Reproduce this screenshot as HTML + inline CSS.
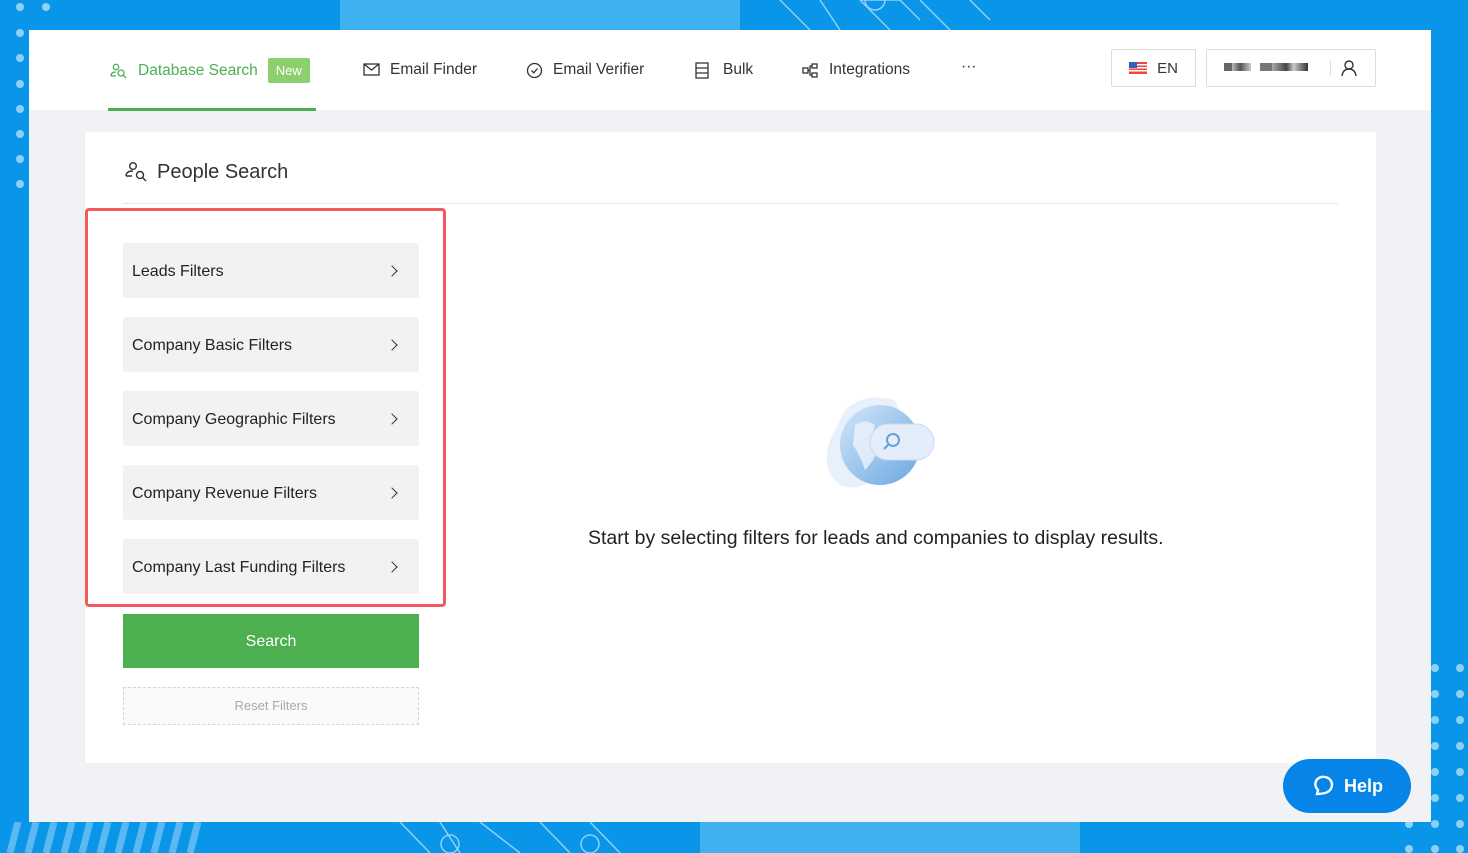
<!DOCTYPE html>
<html><head><meta charset="utf-8"><style>
*{margin:0;padding:0;box-sizing:border-box}
body{width:1468px;height:853px;overflow:hidden;background:#0a96e8;font-family:"Liberation Sans",sans-serif;position:relative;color:#333}
.abs{position:absolute}
.dot{position:absolute;width:8px;height:8px;border-radius:50%;background:#8fd0f7}
.panel{left:29px;top:30px;width:1402px;height:792px;background:#f0f2f5}
.nav{left:29px;top:30px;width:1402px;height:80px;background:#fff}
.ni{position:absolute;top:61px;font-size:15.5px;color:#333;display:flex;align-items:center;gap:10px}
.card{left:85px;top:132px;width:1291px;height:631px;background:#fff}
.fb{position:absolute;left:123px;width:296px;height:55px;background:#f2f2f2;border-radius:2px;font-size:16px;color:#222;padding-left:9px;line-height:57px}
.fb:after{content:"";position:absolute;right:23px;top:24px;width:7px;height:7px;border-right:1.5px solid #333;border-top:1.5px solid #333;transform:rotate(45deg)}
</style></head><body>
<div class="abs" style="left:340px;top:0;width:400px;height:30px;background:#3fb0f0"></div>
<div class="abs" style="left:700px;top:822px;width:380px;height:31px;background:#3fb0f0"></div>
<svg class="abs" style="left:760px;top:0" width="260" height="30"><g stroke="#8fd0f7" stroke-width="1.5" fill="none"><path d="M20 0 L50 30 M60 0 L80 30 M100 0 L140 0 L160 20 M100 0 L130 30 M160 0 L190 30 M210 0 L230 20"/><circle cx="115" cy="0" r="10"/></g></svg>
<svg class="abs" style="left:380px;top:822px" width="260" height="31"><g stroke="#8fd0f7" stroke-width="1.5" fill="none"><path d="M20 0 L50 31 M60 0 L80 31 M100 0 L140 31 M160 0 L190 31 M210 0 L240 31"/><circle cx="70" cy="22" r="9"/><circle cx="210" cy="22" r="9"/></g></svg>
<div class="dot" style="left:16px;top:3px"></div><div class="dot" style="left:42px;top:3px"></div>
<div class="dot" style="left:16px;top:29px"></div><div class="dot" style="left:16px;top:54px"></div><div class="dot" style="left:16px;top:80px"></div><div class="dot" style="left:16px;top:105px"></div><div class="dot" style="left:16px;top:130px"></div><div class="dot" style="left:16px;top:155px"></div><div class="dot" style="left:16px;top:180px"></div>
<div class="dot" style="left:1431px;top:664px"></div><div class="dot" style="left:1456px;top:664px"></div>
<div class="dot" style="left:1431px;top:690px"></div><div class="dot" style="left:1456px;top:690px"></div>
<div class="dot" style="left:1431px;top:716px"></div><div class="dot" style="left:1456px;top:716px"></div>
<div class="dot" style="left:1431px;top:742px"></div><div class="dot" style="left:1456px;top:742px"></div>
<div class="dot" style="left:1431px;top:768px"></div><div class="dot" style="left:1456px;top:768px"></div>
<div class="dot" style="left:1431px;top:794px"></div><div class="dot" style="left:1456px;top:794px"></div>
<div class="dot" style="left:1405px;top:820px"></div><div class="dot" style="left:1431px;top:820px"></div><div class="dot" style="left:1456px;top:820px"></div>
<div class="dot" style="left:1405px;top:845px"></div><div class="dot" style="left:1431px;top:845px"></div><div class="dot" style="left:1456px;top:845px"></div>
<svg class="abs" style="left:0;top:822px" width="300" height="31"><g stroke="#5ab8f2" stroke-width="7"><path d="M10 31 L18 0 M28 31 L36 0 M46 31 L54 0 M64 31 L72 0 M82 31 L90 0 M100 31 L108 0 M118 31 L126 0 M136 31 L144 0 M154 31 L162 0 M172 31 L180 0 M190 31 L198 0"/></g></svg>

<div class="abs panel"></div>
<div class="abs nav"></div>
<div class="abs" style="left:108px;top:108px;width:208px;height:3px;background:#4caf50"></div>

<div class="ni" style="left:110px;color:#4caf50;top:58px">
<svg width="18" height="16" viewBox="0 0 18 16" fill="none" stroke="#4caf50" stroke-width="1.3"><circle cx="6" cy="4" r="2.7"/><path d="M1 13 Q1 9 6 9 M1 13 H6"/><circle cx="11" cy="10" r="3"/><path d="M13 12 L16 15"/></svg>
<span>Database Search</span><span style="background:#8ccf6e;color:#fff;font-size:13px;padding:5px 8px;border-radius:2px">New</span></div>
<div class="ni" style="left:363px"><svg width="17" height="14" viewBox="0 0 17 14" fill="none" stroke="#333" stroke-width="1.3"><rect x="1" y="1" width="15" height="11"/><path d="M1 1 L8.5 7 L16 1"/></svg><span>Email Finder</span></div>
<div class="ni" style="left:526px"><svg width="17" height="17" viewBox="0 0 17 17" fill="none" stroke="#333" stroke-width="1.3"><circle cx="8.5" cy="8.5" r="7"/><path d="M5.5 8.5 L7.8 10.8 L11.5 6.5"/></svg><span>Email Verifier</span></div>
<div class="ni" style="left:695px"><svg width="14" height="17" viewBox="0 0 14 17" fill="none" stroke="#333" stroke-width="1.3"><rect x="1" y="1" width="12" height="15"/><path d="M1 6 H13 M1 11 H13"/></svg><span style="margin-left:4px">Bulk</span></div>
<div class="ni" style="left:802px"><svg width="17" height="15" viewBox="0 0 17 15" fill="none" stroke="#333" stroke-width="1.3"><rect x="1" y="5" width="5" height="5"/><rect x="10" y="1" width="5" height="4"/><rect x="10" y="10" width="5" height="4"/><path d="M6 7.5 H8 V3 H10 M8 7.5 V12 H10"/></svg><span>Integrations</span></div>
<div class="ni" style="left:961px;top:58px">···</div>

<div class="abs" style="left:1111px;top:49px;width:85px;height:38px;border:1px solid #ddd;border-radius:2px;display:flex;align-items:center;justify-content:center;gap:10px;font-size:15px">
<svg width="18" height="12"><rect width="18" height="12" fill="#e44"/><rect y="2" width="18" height="1.5" fill="#fff"/><rect y="5" width="18" height="1.5" fill="#fff"/><rect y="8" width="18" height="1.5" fill="#fff"/><rect width="8" height="6" fill="#3b5bbf"/></svg>EN</div>
<div class="abs" style="left:1206px;top:49px;width:170px;height:38px;border:1px solid #ddd;border-radius:2px">
<div class="abs" style="left:17px;top:13px;width:27px;height:8px;background:linear-gradient(90deg,#666 30%,#bbb 30%,#555 60%,#ccc)"></div>
<div class="abs" style="left:53px;top:13px;width:48px;height:8px;background:linear-gradient(90deg,#777 25%,#aaa 25%,#444 55%,#ccc 70%,#333)"></div>
<div class="abs" style="left:123px;top:10px;width:1px;height:16px;background:#ddd"></div>
<svg class="abs" style="left:134px;top:10px" width="16" height="17" fill="none" stroke="#333" stroke-width="1.4"><circle cx="8" cy="5" r="4"/><path d="M1 16 Q2 9 8 9 Q14 9 15 16"/></svg>
</div>

<div class="abs card"></div>
<svg class="abs" style="left:125px;top:161px" width="24" height="22" fill="none" stroke="#333" stroke-width="1.4"><circle cx="8" cy="5" r="3.3"/><path d="M1 15 Q1 10 8 10 M1 15 H7"/><circle cx="15" cy="14" r="3.5"/><path d="M17.5 16.5 L21 20"/></svg>
<div class="abs" style="left:157px;top:161px;font-size:20px;color:#333">People Search</div>
<div class="abs" style="left:123px;top:203px;width:1215px;height:1px;background:#e5e5e5"></div>

<div class="abs" style="left:85px;top:208px;width:361px;height:399px;border:3px solid #f35a5e;border-radius:4px"></div>
<div class="fb" style="top:243px">Leads Filters</div>
<div class="fb" style="top:317px">Company Basic Filters</div>
<div class="fb" style="top:391px">Company Geographic Filters</div>
<div class="fb" style="top:465px">Company Revenue Filters</div>
<div class="fb" style="top:539px">Company Last Funding Filters</div>
<div class="abs" style="left:123px;top:614px;width:296px;height:54px;background:#4caf50;color:#fff;font-size:16px;text-align:center;line-height:55px">Search</div>
<div class="abs" style="left:123px;top:687px;width:296px;height:38px;border:1px dashed #d5d5d5;background:#fafafa;color:#aaa;font-size:13px;text-align:center;line-height:36px">Reset Filters</div>

<svg class="abs" style="left:825px;top:390px" width="112" height="106">
<defs><linearGradient id="g" x1="0" y1="0" x2="1" y2="1"><stop offset="0" stop-color="#d4e6f7"/><stop offset="1" stop-color="#6aa7e3"/></linearGradient></defs>
<path d="M20 20 Q40 2 70 10 Q85 40 60 75 Q40 105 15 95 Q-5 80 5 50 Z" fill="#e8f1fb"/>
<circle cx="55" cy="55" r="40" fill="url(#g)"/>
<path d="M30 35 Q40 28 50 35 Q45 48 55 55 Q50 70 40 80 Q35 65 28 55 Z" fill="#edf4fc" opacity=".8"/>
<rect x="45" y="34" width="64" height="36" rx="18" fill="#e4eefa" stroke="#c6daf1"/>
<circle cx="68" cy="50" r="6" fill="none" stroke="#6aa0d8" stroke-width="2"/><path d="M63 55 L59 59" stroke="#6aa0d8" stroke-width="2"/>
</svg>
<div class="abs" style="left:588px;top:527px;font-size:19.5px;color:#222">Start by selecting filters for leads and companies to display results.</div>

<div class="abs" style="left:1283px;top:759px;width:128px;height:54px;border-radius:27px;background:#0684e8;color:#fff;font-weight:bold;font-size:18px;display:flex;align-items:center;justify-content:center;gap:9px">
<svg width="24" height="24" fill="none" stroke="#fff" stroke-width="2.4"><path d="M6 20 L7 16 Q3 12 5 7 Q8 2 14 3 Q20 4 21 10 Q21 17 14 19 Q10 20 6 20 Z"/></svg>Help</div>
</body></html>
